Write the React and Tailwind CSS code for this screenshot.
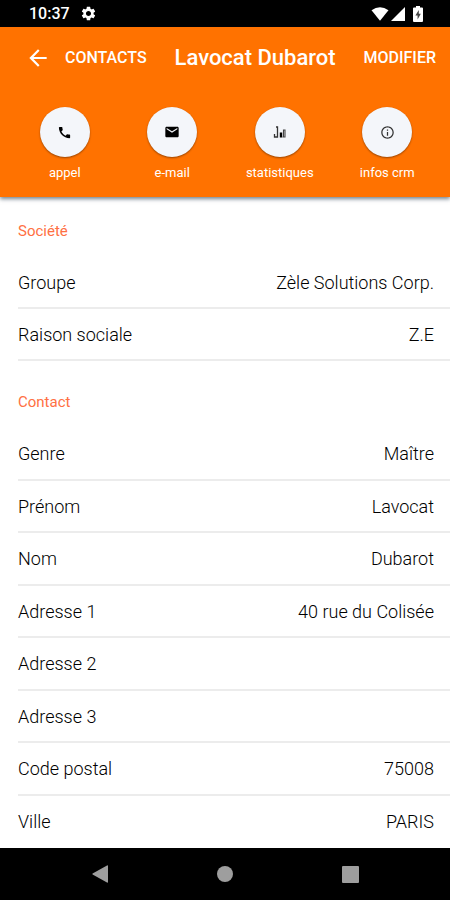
import { MdArrowBack, MdCall, MdEmail, MdInfoOutline, MdSettings } from "react-icons/md"

const company = [
  { label: "Groupe", value: "Zèle Solutions Corp." },
  { label: "Raison sociale", value: "Z.E" },
]

const contact = [
  { label: "Genre", value: "Maître" },
  { label: "Prénom", value: "Lavocat" },
  { label: "Nom", value: "Dubarot" },
  { label: "Adresse 1", value: "40 rue du Colisée" },
  { label: "Adresse 2", value: "" },
  { label: "Adresse 3", value: "" },
  { label: "Code postal", value: "75008" },
  { label: "Ville", value: "PARIS" },
]

const StatsIcon = () => (
  <svg viewBox="0 0 14 14" className="h-[14px] w-[14px]" fill="none" stroke="currentColor">
    <path d="M1.5 9V12H4.5V2H3" stroke="#333" strokeWidth="1.3" />
    <path d="M8 12.5V7.5" strokeWidth="2.4" />
    <path d="M9.5 12H12V5H10.5V12" stroke="#444" strokeWidth="1.1" />
  </svg>
)

const actions = [
  { label: "appel", icon: <MdCall className="h-[15px] w-[15px]" /> },
  { label: "e-mail", icon: <MdEmail className="h-4 w-4" /> },
  { label: "statistiques", icon: <StatsIcon /> },
  { label: "infos crm", icon: <MdInfoOutline className="h-[15px] w-[15px] text-[#333]" /> },
]

const StatusBar = () => (
  <div className="flex h-[27px] items-center justify-between bg-black pl-[29px] pr-[27px] text-white">
    <div className="flex items-center gap-[10px]">
      <span className="text-base font-medium">10:37</span>
      <MdSettings className="h-[17px] w-[17px]" />
    </div>
    <div className="flex items-center">
      <svg viewBox="0 0 18 14" className="h-[14px] w-[18px]" fill="currentColor">
        <path d="M0.5 3.2Q9-2.6 17.5 3.2L9 13.8Z" />
      </svg>
      <svg viewBox="0 0 14 14" className="ml-[2px] h-[14px] w-[14px]" fill="currentColor">
        <path d="M0 14L14 0V14Z" />
      </svg>
      <svg viewBox="0 0 10 16" className="ml-2 h-4 w-[10px]">
        <path d="M3 0h4v1.6h2q1 0 1 1V15q0 1-1 1H1q-1 0-1-1V2.6q0-1 1-1h2Z" fill="#fff" />
        <path d="M5.8 4L2.4 9.4h2.2V13.4L7.8 7.8H5.8Z" fill="#444" />
      </svg>
    </div>
  </div>
)

const Rows = ({ items, className = "" }) => (
  <dl className={`flex flex-1 flex-col pl-[18px] ${className}`}>
    {items.map((item) => (
      <div
        key={item.label}
        className="flex min-h-[52px] flex-1 items-center justify-between border-b-2 border-[#ececec] pr-4 pt-[2px] text-lg font-light text-black"
      >
        <dt>{item.label}</dt>
        <dd>{item.value}</dd>
      </div>
    ))}
  </dl>
)

const App = () => {
  return (
    <div className="flex min-h-screen flex-col bg-white font-['Roboto',sans-serif]">
      <StatusBar />

      <header className="relative h-[170px] bg-[#ff7200] text-white shadow-[0_2px_4px_rgba(0,30,50,0.55)]">
        <div className="flex h-[61px] items-center justify-between pl-[25px] pr-[14px]">
          <button className="flex items-center gap-[14px] font-medium">
            <MdArrowBack className="h-[26px] w-[26px]" />
            CONTACTS
          </button>
          <h1 className="text-[22px] font-medium">Lavocat Dubarot</h1>
          <button className="font-medium">MODIFIER</button>
        </div>
        <nav className="grid grid-cols-4 pl-[11px] pr-[9px] pt-[19px]">
          {actions.map((action) => (
            <button key={action.label} className="flex flex-col items-center gap-[6px] text-[13px] leading-5">
              <span className="flex h-[50px] w-[50px] items-center justify-center rounded-full bg-[#f4f6fa] text-black shadow-[0_1px_2px_rgba(0,0,0,0.4)]">
                {action.icon}
              </span>
              {action.label}
            </button>
          ))}
        </nav>
      </header>

      <main className="flex flex-1 flex-col">
        <section>
          <h2 className="px-[18px] pb-4 pt-6 text-[15px] leading-5 text-[#ff7043]">Société</h2>
          <Rows items={company} />
        </section>
        <section className="flex flex-1 flex-col">
          <h2 className="px-[18px] pb-4 pt-[31px] text-[15px] leading-5 text-[#ff7043]">Contact</h2>
          <Rows items={contact} className="[&>div:last-child]:border-transparent" />
        </section>
      </main>

      <footer className="flex h-[52px] items-center bg-black px-[37px] text-[#9e9e9e]">
        <button aria-label="Retour" className="flex flex-1 justify-center">
          <svg viewBox="0 0 16 18" className="h-[18px] w-4" fill="currentColor">
            <path d="M16 1V17Q16 18 15 17.6L0.6 9.6Q0 9 0.6 8.4L15 0.4Q16 0 16 1Z" />
          </svg>
        </button>
        <button aria-label="Accueil" className="flex flex-1 justify-center">
          <span className="h-4 w-4 rounded-full bg-[#9e9e9e]" />
        </button>
        <button aria-label="Applications récentes" className="flex flex-1 justify-center">
          <span className="h-[17px] w-[17px] rounded-[1px] bg-[#9e9e9e]" />
        </button>
      </footer>
    </div>
  )
}

export default App
